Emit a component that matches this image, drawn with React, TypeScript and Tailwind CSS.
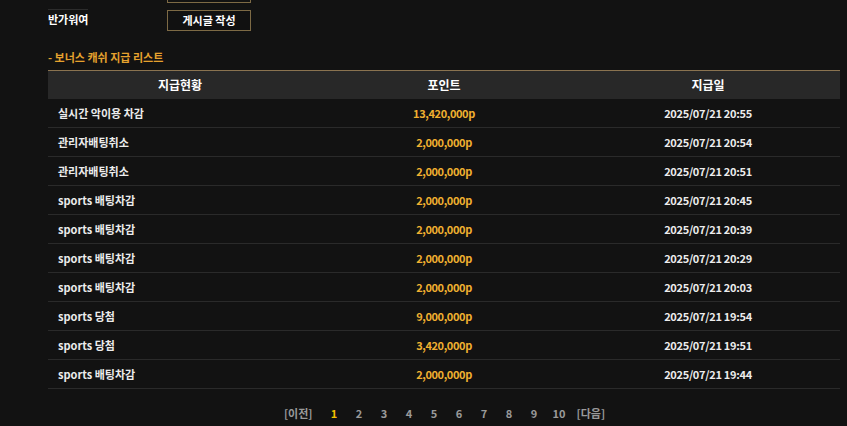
import React from "react";

const rows = [
  { label: "실시간 악이용 차감", point: "13,420,000p", date: "2025/07/21 20:55" },
  { label: "관리자배팅취소", point: "2,000,000p", date: "2025/07/21 20:54" },
  { label: "관리자배팅취소", point: "2,000,000p", date: "2025/07/21 20:51" },
  { label: "sports 배팅차감", point: "2,000,000p", date: "2025/07/21 20:45" },
  { label: "sports 배팅차감", point: "2,000,000p", date: "2025/07/21 20:39" },
  { label: "sports 배팅차감", point: "2,000,000p", date: "2025/07/21 20:29" },
  { label: "sports 배팅차감", point: "2,000,000p", date: "2025/07/21 20:03" },
  { label: "sports 당첨", point: "9,000,000p", date: "2025/07/21 19:54" },
  { label: "sports 당첨", point: "3,420,000p", date: "2025/07/21 19:51" },
  { label: "sports 배팅차감", point: "2,000,000p", date: "2025/07/21 19:44" },
];

const pages = [1, 2, 3, 4, 5, 6, 7, 8, 9, 10];

export default function App() {
  return (
    <div
      className="h-[426px] w-[847px] overflow-hidden bg-[#121212] text-[11px] font-bold text-[#e8e8e8]"
      style={{ fontFamily: '"Noto Sans CJK KR", "Noto Sans", sans-serif' }}
    >
      {/* form rows (cut off above) */}
      <div className="flex pl-[48px]">
        <div className="w-[119px]" />
        <div className="h-[3px] w-[84px] border-x border-b border-[#7d6a45]" />
      </div>
      <div className="mt-[6px] flex pl-[48px]">
        <div className="w-[119px]">
          <div className="w-[40px] border-t border-[#2c2c2c]" />
          <div className="mt-[2px] leading-[14px] text-white">반가워여</div>
        </div>
        <button className="mt-[1px] h-[21px] w-[84px] border border-[#7d6a45] bg-[#111] text-[11px] font-bold text-white">
          게시글 작성
        </button>
      </div>

      <div className="mt-[19px] px-[48px] leading-[14px] text-[#e6a22e]">- 보너스 캐쉬 지급 리스트</div>

      <div className="mt-[6px] ml-[48px] w-[792px]">
        <div className="grid h-[29px] grid-cols-3 items-center border-t border-[#8a7350] bg-[#282828] text-[12px] text-white">
          <div className="text-center">지급현황</div>
          <div className="text-center">포인트</div>
          <div className="text-center">지급일</div>
        </div>
        {rows.map((r, i) => (
          <div key={i} className="grid h-[29px] grid-cols-3 items-center border-b border-[#2a2a2a]">
            <div className="pl-[10px] text-[#ececec]">{r.label}</div>
            <div className="text-center tracking-[-0.4px] text-[#f0b030]">{r.point}</div>
            <div className="text-center tracking-[-0.3px] text-[#ececec]">{r.date}</div>
          </div>
        ))}
      </div>

      <div className="mt-[16px] flex items-center justify-center pl-[42px] text-[11px] text-[#9a9a9a]">
        <span className="mr-[9px]">[이전]</span>
        {pages.map((p) => (
          <span key={p} className={`w-[25px] text-center ${p === 1 ? "text-[#f5c000]" : ""}`}>
            {p}
          </span>
        ))}
        <span className="ml-[5px]">[다음]</span>
      </div>
    </div>
  );
}
